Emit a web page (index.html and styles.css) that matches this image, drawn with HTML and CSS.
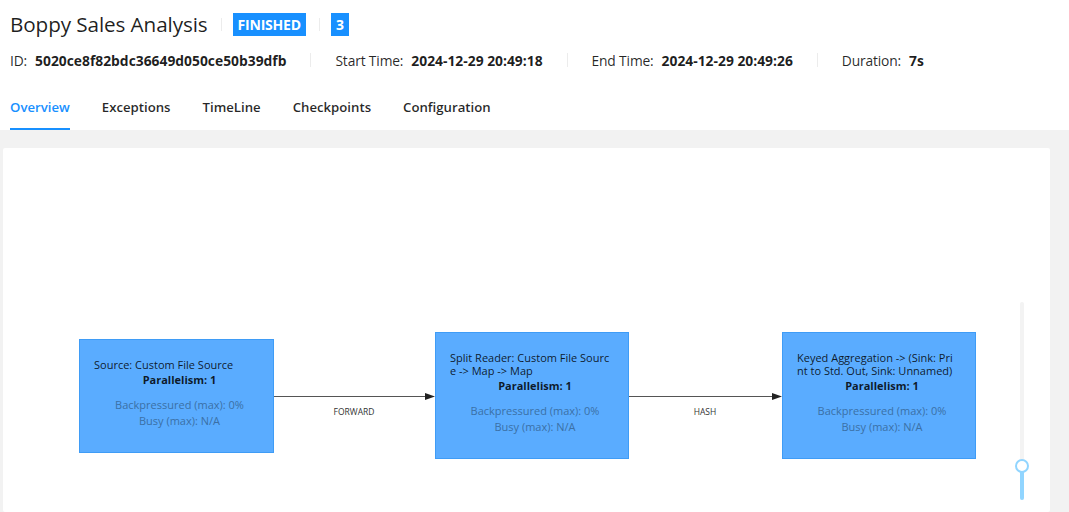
FILE: index.html
```html
<!DOCTYPE html>
<html>
<head>
<meta charset="utf-8">
<link rel="stylesheet" href="styles.css">
</head>
<body>
<div class="header">
  <div class="title-row">
    <h1 class="title">Boppy Sales Analysis</h1>
    <span class="vdiv"></span>
    <span class="badge">FINISHED</span>
    <span class="vdiv"></span>
    <span class="badge badge-num">3</span>
  </div>
  <div class="meta">
    <div class="meta-item"><span class="label">ID:</span><span class="value">5020ce8f82bdc36649d050ce50b39dfb</span></div>
    <span class="vdiv meta-div"></span>
    <div class="meta-item"><span class="label">Start Time:</span><span class="value">2024-12-29 20:49:18</span></div>
    <span class="vdiv meta-div"></span>
    <div class="meta-item"><span class="label">End Time:</span><span class="value">2024-12-29 20:49:26</span></div>
    <span class="vdiv meta-div"></span>
    <div class="meta-item"><span class="label">Duration:</span><span class="value">7s</span></div>
  </div>
  <div class="tabs">
    <div class="tab active">Overview</div>
    <div class="tab">Exceptions</div>
    <div class="tab">TimeLine</div>
    <div class="tab">Checkpoints</div>
    <div class="tab">Configuration</div>
  </div>
</div>
<div class="content">
  <div class="card">
    <div class="graph">
      <div class="node node-1">
        <div class="node-name">Source: Custom File Source</div>
        <div class="node-par">Parallelism: 1</div>
        <div class="node-stats">Backpressured (max): 0%<br>Busy (max): N/A</div>
      </div>
      <svg class="edge edge-1" width="161" height="40" viewBox="0 0 161 40">
        <line x1="0" y1="20.5" x2="152" y2="20.5" stroke="#555" stroke-width="1"/>
        <path d="M151 17 L161 20.5 L151 24 Z" fill="#222"/>
        <text x="80" y="39" text-anchor="middle" class="edge-label">FORWARD</text>
      </svg>
      <div class="node node-2">
        <div class="node-name">Split Reader: Custom File Sourc<br>e -&gt; Map -&gt; Map</div>
        <div class="node-par">Parallelism: 1</div>
        <div class="node-stats">Backpressured (max): 0%<br>Busy (max): N/A</div>
      </div>
      <svg class="edge edge-2" width="153" height="40" viewBox="0 0 153 40">
        <line x1="0" y1="20.5" x2="144" y2="20.5" stroke="#555" stroke-width="1"/>
        <path d="M143 17 L153 20.5 L143 24 Z" fill="#222"/>
        <text x="76" y="39" text-anchor="middle" class="edge-label">HASH</text>
      </svg>
      <div class="node node-3">
        <div class="node-name">Keyed Aggregation -&gt; (Sink: Pri<br>nt to Std. Out, Sink: Unnamed)</div>
        <div class="node-par">Parallelism: 1</div>
        <div class="node-stats">Backpressured (max): 0%<br>Busy (max): N/A</div>
      </div>
    </div>
    <div class="zoom-slider">
      <div class="slider-fill"></div>
      <div class="slider-handle"></div>
    </div>
  </div>
</div>
</body>
</html>
```

FILE: styles.css
```css
* { box-sizing: border-box; }
html, body {
  margin: 0;
  padding: 0;
  height: 100%;
  overflow: hidden;
  background: #f2f2f2;
  font-family: "Open Sans", "Noto Sans", "Liberation Sans", sans-serif;
  color: rgba(0, 0, 0, 0.85);
}
.header {
  background: #fff;
  padding: 0 0 0 10px;
}
.title-row {
  height: 48px;
  display: flex;
  align-items: center;
}
.title {
  margin: 0;
  font-size: 20.7px;
  font-weight: 400;
  line-height: 26px;
  color: rgba(0, 0, 0, 0.88);
  letter-spacing: -0.1px;
}
.vdiv {
  display: inline-block;
  width: 1px;
  height: 13px;
  background: #ececec;
  margin: 0 11px 0 13px;
}
.badge {
  display: inline-flex;
  align-items: center;
  justify-content: center;
  height: 23px;
  padding: 0 5px;
  background: #1890ff;
  color: #fff;
  font-size: 14px;
  font-weight: 700;
  letter-spacing: -0.2px;
}
.badge-num {
  width: 18px;
  padding: 0;
}
.meta {
  height: 24px;
  display: flex;
  align-items: center;
  font-size: 13.8px;
}
.meta-item {
  display: flex;
  align-items: center;
  white-space: nowrap;
}
.label {
  color: rgba(0, 0, 0, 0.85);
  margin-right: 8px;
  letter-spacing: -0.15px;
}
.value {
  font-weight: 700;
  font-size: 13.85px;
  color: rgba(0, 0, 0, 0.88);
}
.meta-div {
  margin: 0 24px 0 24px;
  height: 14px;
}
.tabs {
  display: flex;
  gap: 32px;
  height: 58px;
}
.tab {
  padding: 24px 0 10px;
  line-height: 22px;
  font-size: 13.2px;
  font-weight: 600;
  color: rgba(0, 0, 0, 0.85);
  border-bottom: 2px solid transparent;
}
.tab.active {
  color: #1890ff;
  border-bottom-color: #1890ff;
}
.content {
  padding: 18px 19px 0 3px;
}
.card {
  position: relative;
  background: #fff;
  border-radius: 2px;
  height: 364px;
}
.graph {
  position: relative;
  top: 185px;
  margin-left: 76px;
  height: 125px;
  display: flex;
  align-items: center;
}
.node {
  width: 194px;
  background: #5aacff;
  border: 1px solid #3f9cf6;
  padding: 18px 8px 23px 14px;
  font-size: 11px;
}
.node-1 { width: 195px; }
.node-name {
  line-height: 13px;
  white-space: nowrap;
  color: rgba(0, 0, 0, 0.85);
}
.node-par {
  margin-top: 1px;
  line-height: 16px;
  font-weight: 700;
  text-align: center;
  color: rgba(0, 0, 0, 0.85);
}
.node-stats {
  margin-top: 9px;
  line-height: 16px;
  text-align: center;
  color: #3b70a6;
}
.edge { display: block; flex: none; }
.edge-label {
  font-family: "Open Sans", "Liberation Sans", sans-serif;
  font-size: 8.5px;
  fill: #333;
}
.zoom-slider {
  position: absolute;
  left: 1017px;
  top: 154px;
  width: 4px;
  height: 198px;
  background: #f3f3f3;
  border-radius: 2px;
}
.slider-fill {
  position: absolute;
  left: 0;
  bottom: 0;
  width: 4px;
  height: 34px;
  background: #91d5ff;
  border-radius: 2px;
}
.slider-handle {
  position: absolute;
  left: -5px;
  top: 157px;
  width: 14px;
  height: 14px;
  border: 2px solid #91d5ff;
  border-radius: 50%;
  background: #fff;
}
```
